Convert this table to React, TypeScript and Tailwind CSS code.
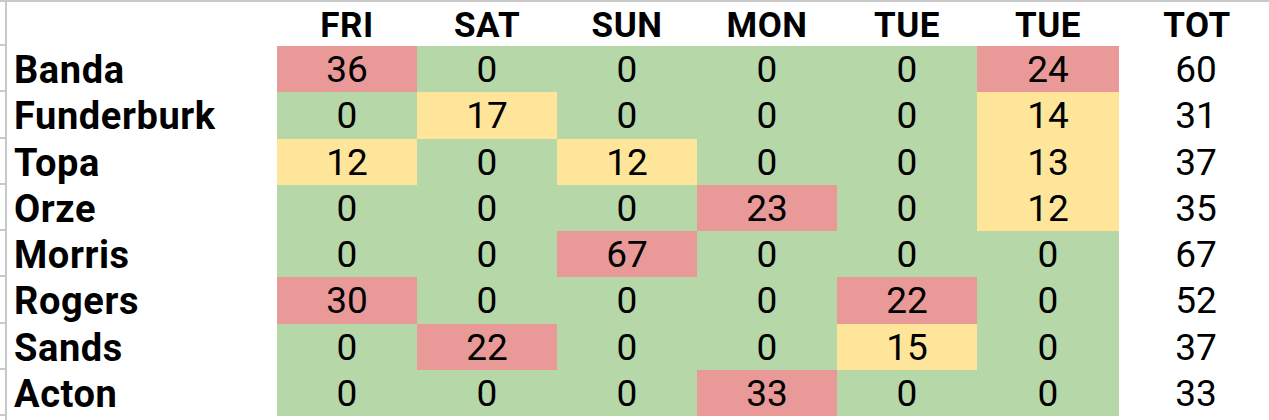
import React from 'react';

const DAYS = ['FRI', 'SAT', 'SUN', 'MON', 'TUE', 'TUE'];

type Row = { name: string; values: number[] };

const ROWS: Row[] = [
  { name: 'Banda', values: [36, 0, 0, 0, 0, 24] },
  { name: 'Funderburk', values: [0, 17, 0, 0, 0, 14] },
  { name: 'Topa', values: [12, 0, 12, 0, 0, 13] },
  { name: 'Orze', values: [0, 0, 0, 23, 0, 12] },
  { name: 'Morris', values: [0, 0, 67, 0, 0, 0] },
  { name: 'Rogers', values: [30, 0, 0, 0, 22, 0] },
  { name: 'Sands', values: [0, 22, 0, 0, 15, 0] },
  { name: 'Acton', values: [0, 0, 0, 33, 0, 0] },
];

// same thresholds as the sheet's conditional formatting
function cellColor(v: number) {
  if (v >= 20) return 'bg-[#ea9999]';
  if (v >= 10) return 'bg-[#ffe599]';
  return 'bg-[#b6d7a8]';
}

const gridCols = 'grid grid-cols-[270px_140px_140px_140px_140px_140px_142px_1fr]';

export default function App() {
  return (
    <div className="w-[1269px] h-[420px] bg-white overflow-hidden border-t-2 border-[#c8c9c8] flex font-['Roboto',sans-serif] text-black">
      {/* row gutter */}
      <div className="w-[7px] shrink-0 border-r-2 border-[#c8c9c8] flex flex-col">
        <div className="h-[44px] border-b-2 border-[#c8c9c8]" />
        {ROWS.map((r) => (
          <div key={r.name} className="h-[46.25px] border-b-2 border-[#c8c9c8] box-border" />
        ))}
      </div>

      <div className="flex-1">
        {/* header */}
        <div className={`${gridCols} h-[44px] items-center text-[35px] font-bold leading-none`}>
          <div />
          {DAYS.map((d, i) => (
            <div key={i} className="text-center pt-[3px] tracking-[0.5px]">{d}</div>
          ))}
          <div className="text-center pt-[3px] pl-[6px] tracking-[0.5px]">TOT</div>
        </div>

        {ROWS.map((row) => {
          const total = row.values.reduce((a, b) => a + b, 0);
          return (
            <div key={row.name} className={`${gridCols} h-[46.25px] text-[37px] leading-none`}>
              <div className="flex items-center pl-[7px] pt-[2px] font-bold text-[38px] tracking-[0.6px]">{row.name}</div>
              {row.values.map((v, i) => (
                <div key={i} className={`flex items-center justify-center pt-[1px] ${cellColor(v)}`}>
                  {v}
                </div>
              ))}
              <div className="flex items-center justify-center pt-[1px] pl-[4px]">{total}</div>
            </div>
          );
        })}
      </div>
    </div>
  );
}
